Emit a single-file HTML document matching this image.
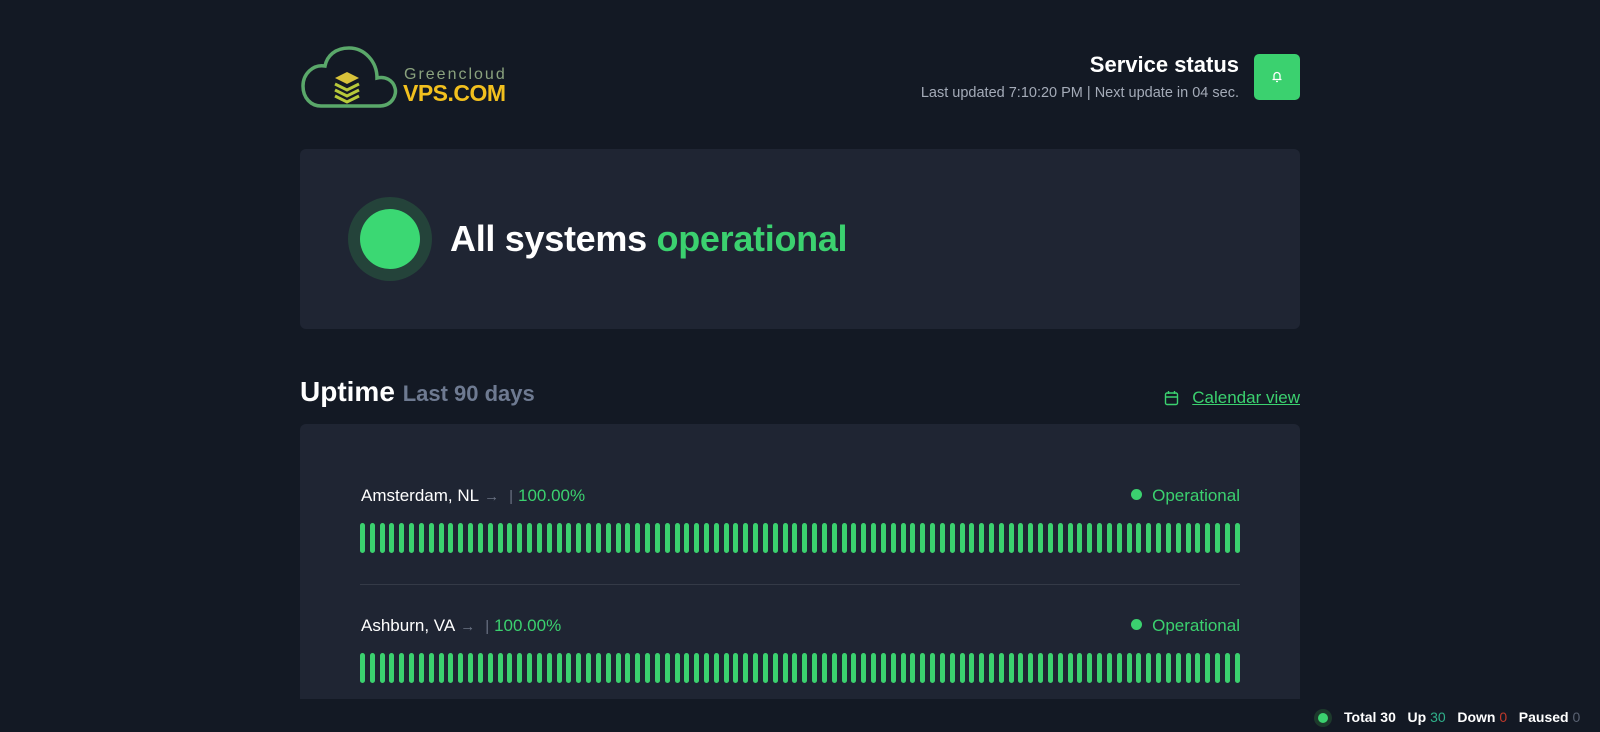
<!DOCTYPE html>
<html><head><meta charset="utf-8"><style>
*{margin:0;padding:0;box-sizing:border-box}
body{width:1600px;height:732px;overflow:hidden;background:#131924;font-family:"Liberation Sans",sans-serif;color:#fff;position:relative}
.abs{position:absolute}
.card{background:#1f2533;border-radius:6px}
.bars{display:flex;justify-content:space-between;width:880px;height:30px}
.bars i{display:block;width:5px;height:30px;background:#3bd16f;border-radius:3px}
.name{font-size:17px;color:#fff}
.name .a{color:#6b7384;font-size:15px;margin:0 5px}
.name .p{color:#3bd16f}
.op{color:#3bd16f;font-size:17px}
.op b{display:inline-block;width:11px;height:11px;border-radius:50%;background:#3bd16f;margin-right:10px;vertical-align:1px}
</style></head><body>
<svg class="abs" style="left:299px;top:44px" width="100" height="66" viewBox="0 0 100 66">
<path d="M22 62 H80 C94 62 98 50 96 44 C94 36 86 32 78 34 C78 18 66 4 50 4 C36 4 28 12 26 22 C14 20 4 30 4 42 C4 54 12 62 22 62 Z" fill="none" stroke="#5aa86a" stroke-width="3.5"/>
<path d="M36 34 L48 28 L60 34 L48 40Z" fill="#d8c23a"/>
<path d="M36 40 L48 46 L60 40 M36 46 L48 52 L60 46 M36 52 L48 58 L60 52" stroke="#b7c93a" stroke-width="3" fill="none"/>
</svg>
<div class="abs" style="left:404px;top:66px;font-size:16px;color:#8aa27e;letter-spacing:2px">Greencloud</div>
<div class="abs" style="left:403px;top:80px;font-size:23px;font-weight:bold;color:#f2c01e;letter-spacing:-0.5px">VPS.COM</div>
<div class="abs" style="right:361px;top:52px;font-size:22px;font-weight:bold">Service status</div>
<div class="abs" style="right:361px;top:85px;font-size:14.5px;color:#a4abb8">Last updated 7:10:20 PM | Next update in 04 sec.</div>
<div class="abs" style="left:1254px;top:54px;width:46px;height:46px;background:#3bd16f;border-radius:5px">
<svg class="abs" style="left:17px;top:16px" width="12" height="13" viewBox="0 0 12 13"><path d="M3 9 V5.5 A3 3 0 0 1 9 5.5 V9 M1.5 9.5 H10.5 M5 11.5 H7" stroke="#fff" stroke-width="1.3" fill="none"/></svg></div>
<div class="abs card" style="left:300px;top:149px;width:1000px;height:180px"></div>
<div class="abs" style="left:348px;top:197px;width:84px;height:84px;border-radius:50%;background:#24433a"></div>
<div class="abs" style="left:360px;top:209px;width:60px;height:60px;border-radius:50%;background:#3bd873"></div>
<div class="abs" style="left:450px;top:218px;font-size:36px;font-weight:bold;letter-spacing:-0.3px">All systems <span style="color:#3bd16f">operational</span></div>
<div class="abs" style="left:300px;top:376px;font-size:28px;font-weight:bold">Uptime <span style="font-size:22px;color:#6e7a91">Last 90 days</span></div>
<svg class="abs" style="left:1164px;top:390px" width="15" height="16" viewBox="0 0 15 16"><rect x="1.5" y="3" width="12" height="11.5" rx="1.5" fill="none" stroke="#3bd16f" stroke-width="1.4"/><path d="M1.5 7 H13.5 M4.5 1 V4 M10.5 1 V4" stroke="#3bd16f" stroke-width="1.4"/></svg>
<div class="abs" style="right:300px;top:388px;font-size:17px;color:#3bd16f;text-decoration:underline">Calendar view</div>
<div class="abs card" style="left:300px;top:424px;width:1000px;height:275px;border-radius:6px 6px 0 0"></div>
<div class="abs name" style="left:361px;top:486px">Amsterdam, NL<span class="a">→</span><span class="a">|</span><span class="p">100.00%</span></div>
<div class="abs op" style="right:360px;top:486px"><b></b>Operational</div>
<div class="abs bars" style="left:360px;top:523px" id="b1"></div>
<div class="abs" style="left:360px;top:584px;width:880px;height:1px;background:#343a47"></div>
<div class="abs name" style="left:361px;top:616px">Ashburn, VA<span class="a">→</span><span class="a">|</span><span class="p">100.00%</span></div>
<div class="abs op" style="right:360px;top:616px"><b></b>Operational</div>
<div class="abs bars" style="left:360px;top:653px" id="b2"></div>
<div class="abs" style="left:0;top:699px;width:1600px;height:33px;background:#131924"></div>
<div class="abs" style="left:1314px;top:709px;width:18px;height:18px;border-radius:50%;background:#1d3a2c"></div>
<div class="abs" style="left:1318px;top:713px;width:10px;height:10px;border-radius:50%;background:#3bd16f"></div>
<div class="abs" style="left:1344px;top:709px;font-size:14px;font-weight:bold;white-space:nowrap">Total 30 &nbsp;&nbsp;Up <span style="color:#2fb08a;font-weight:normal">30</span> &nbsp;&nbsp;Down <span style="color:#c0392b;font-weight:normal">0</span> &nbsp;&nbsp;Paused <span style="color:#5a6272;font-weight:normal">0</span></div>
<script>
['b1','b2'].forEach(function(id){var e=document.getElementById(id),h='';for(var i=0;i<90;i++)h+='<i></i>';e.innerHTML=h;});
</script>
</body></html>
